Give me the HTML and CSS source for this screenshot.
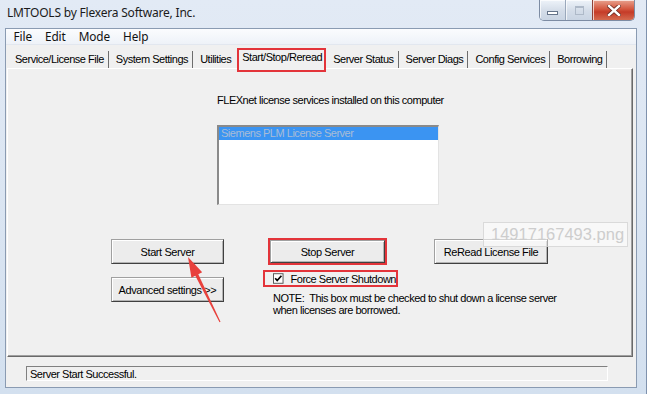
FILE: index.html
```html
<html>

<head>
    <title>LMTOOLS by Flexera Software, Inc.</title>
    <link rel="stylesheet" href="styles.css">
</head>

<body>
    <div class="window">
        <div class="titlebar">
            <span class="title">LMTOOLS by Flexera Software, Inc.</span>
            <div class="caption-btns">
                <span class="cbtn min"><i></i></span>
                <span class="cbtn max"><i></i></span>
                <span class="cbtn close">
                    <svg width="14" height="11" viewBox="0 0 14 11">
                        <path d="M2 1 L12 10 M12 1 L2 10" stroke="#6b2a22" stroke-width="4" stroke-linecap="square" />
                        <path d="M2 1 L12 10 M12 1 L2 10" stroke="#fff" stroke-width="2.4" stroke-linecap="square" />
                    </svg>
                </span>
            </div>
        </div>

        <div class="client">
            <div class="menubar">
                <span>File</span>
                <span>Edit</span>
                <span>Mode</span>
                <span>Help</span>
            </div>

            <div class="tabs">
                <span class="tab">Service/License File</span>
                <span class="tab">System Settings</span>
                <span class="tab before-active">Utilities</span>
                <span class="tab active">Start/Stop/Reread</span>
                <span class="tab">Server Status</span>
                <span class="tab">Server Diags</span>
                <span class="tab">Config Services</span>
                <span class="tab">Borrowing</span>
            </div>

            <div class="panel">
                <p class="caption">FLEXnet license services installed on this computer</p>
                <div class="listbox">
                    <div class="item selected">Siemens PLM License Server</div>
                </div>

                <div class="controls">
                    <button class="btn start">Start Server</button>
                    <button class="btn stop marked">Stop Server</button>
                    <button class="btn reread">ReRead License File</button>
                    <button class="btn adv">Advanced settings &gt;&gt;</button>
                    <div class="force-block">
                        <label class="force marked">
                            <svg class="check" width="11" height="11" viewBox="0 0 11 11">
                                <rect x="0.5" y="0.5" width="10" height="10" fill="#fff" stroke="#555" />
                                <path d="M2.3 5.2 L4.4 7.6 L8.8 2.6" fill="none" stroke="#000" stroke-width="1.8" />
                            </svg>
                            Force Server Shutdown
                        </label>
                        <p class="note">NOTE:&nbsp; This box must be checked to shut down a license server<br>when licenses are borrowed.</p>
                    </div>
                </div>
            </div>

            <div class="statusbar">
                <div class="status-field">Server Start Successful.</div>
            </div>
        </div>

        <div class="watermark">14917167493.png</div>

        <svg class="arrow" width="647" height="394" viewBox="0 0 647 394">
            <polygon points="188,257 202.2,272.3 198.3,274.2 220.5,321.7 219.5,322.3 195.3,275.8 191.4,277.7" fill="#e8413d" />
        </svg>
    </div>
</body>

</html>
```

FILE: styles.css
```css
body {
    margin: 0;
    font-family: "Liberation Sans", Arial, sans-serif;
    background: #d7e3f1;
}

.window {
    position: relative;
    width: 647px;
    height: 394px;
    box-sizing: border-box;
    background: linear-gradient(#e2eaf5, #d3e0ef);
    border-right: 1px solid #7f92ad;
    overflow: hidden;
}

/* title bar */
.titlebar {
    display: flex;
    align-items: flex-start;
    height: 28px;
    padding-left: 7px;
    padding-right: 11px;
}

.title {
    font-family: "Noto Sans", sans-serif;
    font-size: 12px;
    letter-spacing: -0.2px;
    line-height: 26px;
    color: #1b1b1b;
}

.caption-btns {
    display: flex;
    margin-left: auto;
    height: 20px;
    border: 1px solid #7d8ca3;
    border-top: none;
    border-radius: 0 0 5px 5px;
    overflow: hidden;
}

.cbtn {
    display: flex;
    align-items: center;
    justify-content: center;
    height: 20px;
    background: linear-gradient(#eef3f9, #d3dce8 55%, #c9d4e3);
    box-shadow: inset 1px 1px rgba(255, 255, 255, 0.7);
}

.cbtn.min {
    width: 25px;
    border-right: 1px solid #9aa8bb;
}

.cbtn.min i {
    display: block;
    width: 9px;
    height: 2px;
    margin-top: 6px;
    background: #fff;
    border: 1px solid #65748a;
}

.cbtn.max {
    width: 26px;
    border-right: 1px solid #8f4238;
}

.cbtn.max i {
    display: block;
    width: 7px;
    height: 6px;
    border: 1px solid #aeb9c8;
    border-top-width: 2px;
}

.cbtn.close {
    width: 41px;
    background: linear-gradient(#e8a28f, #d4573f 45%, #c53b28 60%, #d46a4f);
}

/* client area */
.client {
    margin-left: 5px;
    width: 632px;
    height: 360px;
    box-sizing: border-box;
    border: 1px solid #8a9bb2;
    background: #f0f0f0;
    font-size: 11px;
    letter-spacing: -0.48px;
}

.menubar {
    display: flex;
    height: 16px;
    padding-left: 1px;
    background: linear-gradient(#fbfcfe, #eef2f8);
    border-bottom: 1px solid #e2e7ef;
    box-sizing: border-box;
    font-family: "Noto Sans", sans-serif;
    font-size: 11.8px;
    letter-spacing: -0.1px;
    line-height: 15px;
    color: #111;
}

.menubar span {
    padding: 0 6.5px;
}

.tabs {
    display: flex;
    align-items: flex-end;
    height: 23px;
    padding-left: 2px;
}

.tab {
    height: 17px;
    line-height: 17px;
    padding: 0 4px 0 7px;
    border-right: 1px solid #6d6d6d;
    white-space: nowrap;
}

.tab.before-active {
    padding-right: 6px;
    border-right: none;
}

.tab.active {
    position: relative;
    z-index: 1;
    height: 24px;
    line-height: 18px;
    margin-bottom: -4px;
    padding: 0 4px 0 5px;
    border-right: none;
    background: #f0f0f0;
    outline: 2px solid #e3343a;
    outline-offset: -2px;
}

.panel {
    height: 289px;
    margin: 0 3px 0 1px;
    box-sizing: border-box;
    padding-top: 25px;
    border-top: 1px solid #fff;
    border-left: 1px solid #fff;
    border-right: 1px solid #696969;
    border-bottom: 1px solid #696969;
    box-shadow: inset -1px -1px #a0a0a0;
}

.caption {
    margin: 0 0 0 209px;
    line-height: 13px;
}

.listbox {
    width: 222px;
    height: 80px;
    margin: 18px 0 0 209px;
    box-sizing: border-box;
    background: #fff;
    border-top: 2px solid #8a8a8a;
    border-left: 2px solid #8a8a8a;
    border-right: 1px solid #e3e3e3;
    border-bottom: 1px solid #e3e3e3;
}

.item {
    height: 13px;
    line-height: 13px;
    padding-left: 2px;
    white-space: nowrap;
}

.item.selected {
    background: #3b94f2;
    color: #a9bcd6;
}

.controls {
    display: grid;
    grid-template-columns: 157px 166px 114px;
    row-gap: 8px;
    margin: 34px 0 0 103px;
    align-items: start;
}

.btn {
    height: 25px;
    padding: 0;
    font-family: inherit;
    font-size: 11px;
    letter-spacing: -0.4px;
    color: #000;
    background: #ececec;
    border: 1px solid;
    border-color: #a0a0a0 #404040 #404040 #a0a0a0;
    box-shadow: inset 1px 1px #fff, inset -1px -1px #b4b4b4;
    white-space: nowrap;
}

.btn.start,
.btn.adv {
    width: 113px;
}

.btn.adv {
    margin-top: 5px;
}

.btn.stop {
    width: 115px;
    height: 23px;
    margin: 1px 0 0 2px;
}

.btn.reread {
    width: 114px;
}

.marked {
    outline: 2px solid #e3343a;
}

.force-block {
    grid-column: 2 / 4;
    padding-left: 5px;
}

.force {
    display: flex;
    align-items: center;
    width: 123px;
    height: 13px;
    margin-left: -8px;
    padding-left: 8px;
    white-space: nowrap;
}

.check {
    margin-right: 7px;
}

.note {
    margin: 7px 0 0 0;
    line-height: 12px;
    white-space: nowrap;
}

.statusbar {
    padding: 9px 28px 0 20px;
}

.status-field {
    height: 15px;
    box-sizing: border-box;
    padding-left: 3px;
    line-height: 14px;
    border-top: 1px solid #808080;
    border-left: 1px solid #808080;
    border-right: 1px solid #fff;
    border-bottom: 1px solid #fff;
}

/* overlays from the screenshot */
.watermark {
    position: absolute;
    left: 483px;
    top: 222px;
    width: 145px;
    height: 25px;
    box-sizing: border-box;
    padding-left: 7px;
    background: rgba(255, 255, 255, 0.55);
    border: 1px solid rgba(205, 205, 205, 0.7);
    color: #cdcdcd;
    font-size: 16.5px;
    letter-spacing: 0;
    line-height: 23px;
}

.arrow {
    position: absolute;
    left: 0;
    top: 0;
    pointer-events: none;
}
```
